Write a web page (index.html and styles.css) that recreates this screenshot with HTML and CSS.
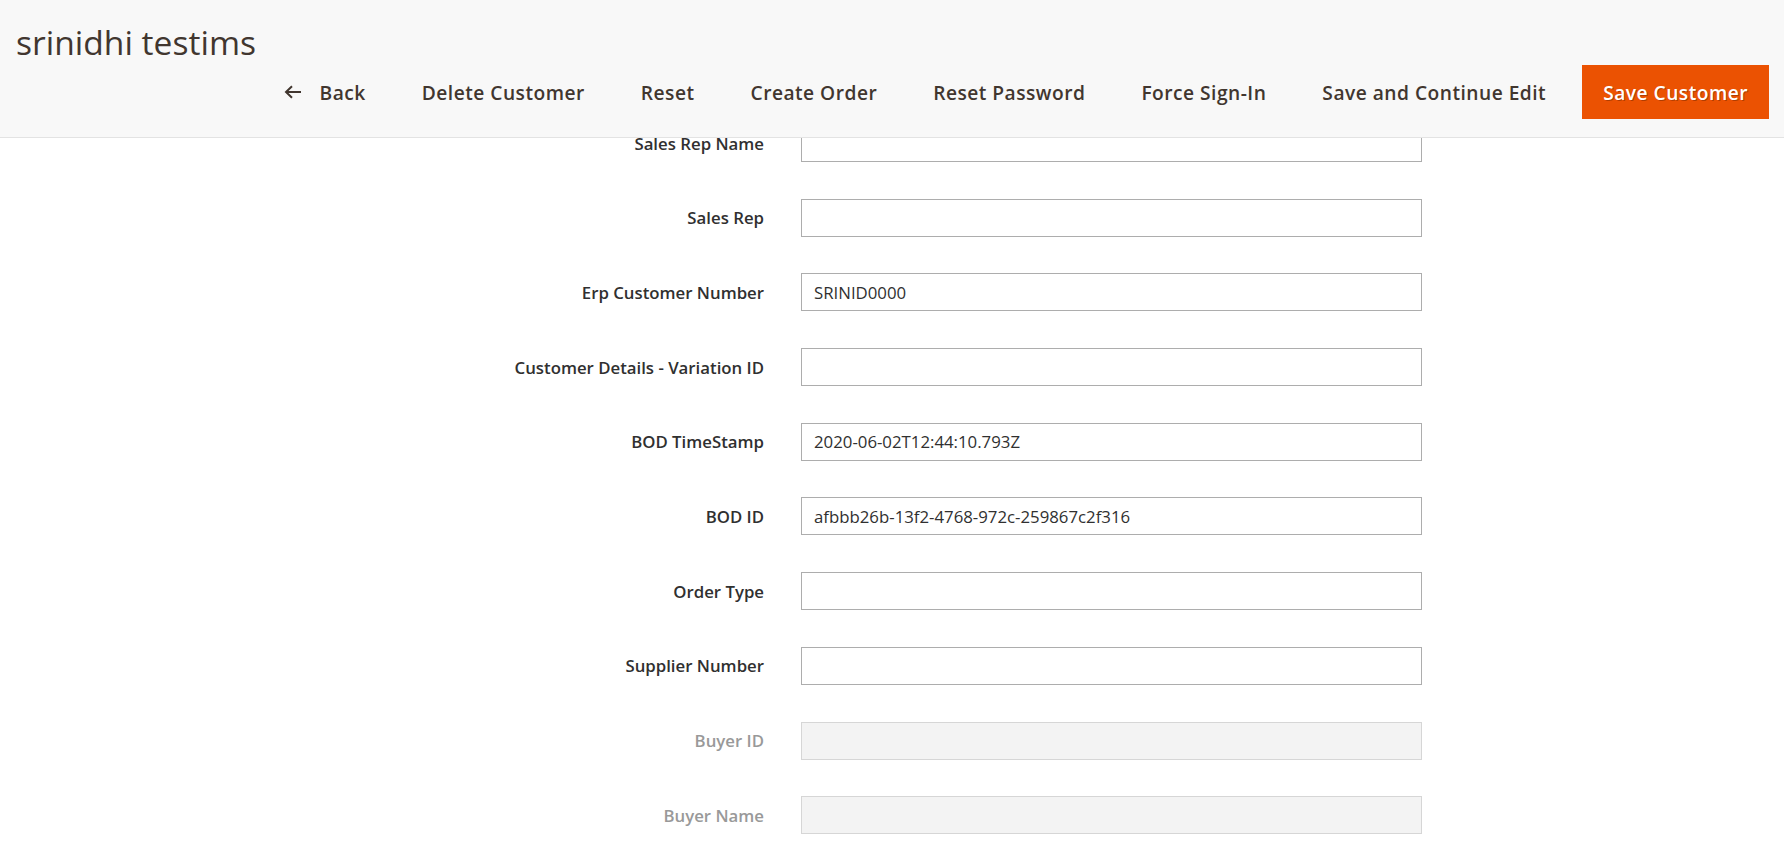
FILE: index.html
```html
<!DOCTYPE html>
<html lang="en">
<head>
<meta charset="utf-8">
<title>srinidhi testims</title>
<link rel="stylesheet" href="styles.css">
</head>
<body>
<header class="page-header">
  <h1 class="page-title">srinidhi testims</h1>
  <div class="page-actions">
    <button class="action back" type="button">
      <svg class="back-icon" width="18" height="14" viewBox="0 0 18 14" aria-hidden="true">
        <path d="M17 7H2.5M8 1.2L2 7l6 5.8" fill="none" stroke="#41362f" stroke-width="2"/>
      </svg>
      <span>Back</span>
    </button>
    <button class="action" type="button">Delete Customer</button>
    <button class="action" type="button">Reset</button>
    <button class="action" type="button">Create Order</button>
    <button class="action" type="button">Reset Password</button>
    <button class="action" type="button">Force Sign-In</button>
    <button class="action" type="button">Save and Continue Edit</button>
    <button class="action primary" type="button">Save Customer</button>
  </div>
</header>

<main class="form">
  <div class="field"><label class="label">Sales Rep Name</label><input class="input" type="text" value=""></div>
  <div class="field"><label class="label">Sales Rep</label><input class="input" type="text" value=""></div>
  <div class="field"><label class="label">Erp Customer Number</label><input class="input" type="text" value="SRINID0000"></div>
  <div class="field"><label class="label">Customer Details - Variation ID</label><input class="input" type="text" value=""></div>
  <div class="field"><label class="label">BOD TimeStamp</label><input class="input" type="text" value="2020-06-02T12:44:10.793Z"></div>
  <div class="field"><label class="label">BOD ID</label><input class="input" type="text" value="afbbb26b-13f2-4768-972c-259867c2f316"></div>
  <div class="field"><label class="label">Order Type</label><input class="input" type="text" value=""></div>
  <div class="field"><label class="label">Supplier Number</label><input class="input" type="text" value=""></div>
  <div class="field disabled"><label class="label">Buyer ID</label><input class="input" type="text" value="" disabled></div>
  <div class="field disabled"><label class="label">Buyer Name</label><input class="input" type="text" value="" disabled></div>
</main>
</body>
</html>
```

FILE: styles.css
```css
* { box-sizing: border-box; }

html, body {
  margin: 0;
  padding: 0;
  background: #ffffff;
  font-family: "Open Sans", "Noto Sans", "Liberation Sans", sans-serif;
  color: #303030;
}

.page-header {
  position: fixed;
  top: 0;
  left: 0;
  right: 0;
  z-index: 10;
  background: #f8f8f8;
  border-bottom: 1px solid #e3e3e3;
  padding: 23px 15px 18px 16px;
}

.page-title {
  margin: 0;
  font-size: 33.6px;
  line-height: 39px;
  font-weight: 400;
  color: #41362f;
}

.page-actions {
  margin-top: 3px;
  display: flex;
  justify-content: flex-end;
  align-items: center;
  height: 54px;
}

.action {
  font-family: "Open Sans", "Noto Sans", "Liberation Sans", sans-serif;
  font-size: 19.2px;
  font-weight: 600;
  letter-spacing: 0.025em;
  color: #41362f;
  background: transparent;
  border: 0;
  padding: 0 18px;
  margin-left: 20px;
  height: 54px;
  display: inline-flex;
  align-items: center;
  cursor: pointer;
}

.action.back {
  gap: 18px;
}

.back-icon {
  display: block;
  margin-top: 0;
}

.action.primary {
  background: #eb5202;
  border: 1px solid #eb5202;
  color: #ffffff;
  text-shadow: 1px 1px 0 rgba(0, 0, 0, 0.25);
  padding: 0 20px;
  margin-left: 18px;
}

.form {
  padding-top: 124px;
  display: flex;
  flex-direction: column;
  gap: 36.7px;
}

.field {
  display: grid;
  grid-template-columns: 764px 621px;
  column-gap: 37px;
  align-items: center;
}

.label {
  text-align: right;
  font-size: 16.8px;
  font-weight: 600;
  color: #303030;
}

.input {
  height: 38px;
  width: 621px;
  border: 1px solid #adadad;
  border-radius: 0;
  background: #ffffff;
  padding: 0 12px;
  font-family: "Open Sans", "Noto Sans", "Liberation Sans", sans-serif;
  font-size: 16.8px;
  color: #303030;
  outline: none;
}

.field.disabled .label {
  color: #999999;
}

.field.disabled .input {
  background: #f3f3f3;
  border-color: #d6d6d6;
}
```
